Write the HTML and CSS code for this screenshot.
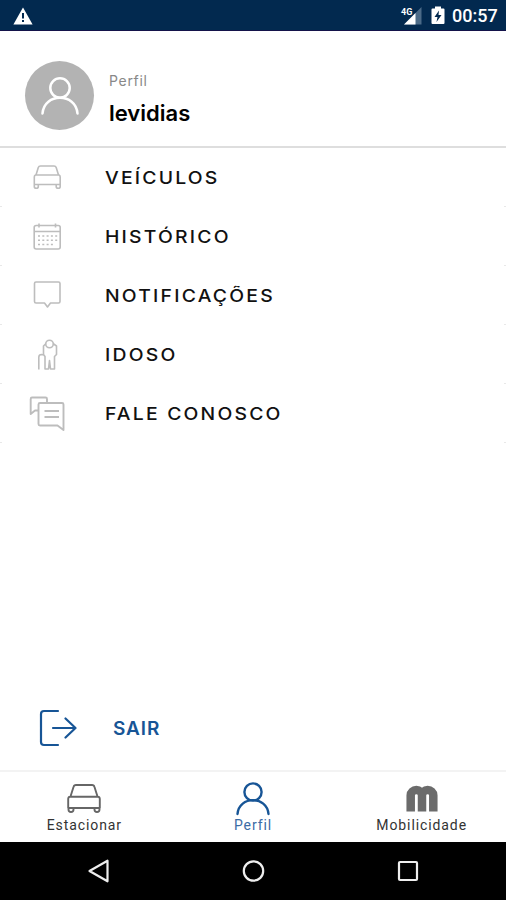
FILE: index.html
```html
<!DOCTYPE html>
<html lang="pt-BR">
<head>
	<meta charset="utf-8" />
	<meta name="viewport" content="width=device-width, initial-scale=1.0" />
	<title>Perfil</title>
	<link rel="stylesheet" href="styles.css">
</head>

<body>
	<div class="status-bar">
		<svg class="warning" width="20" height="18" viewBox="0 0 20 18">
			<path d="M10 .5L19.6 17.500H.4z" fill="#fff" />
			<path d="M10 6v5.500M10 13v2" stroke="#02294f" stroke-width="2" />
		</svg>
		<svg class="signal" width="22" height="20" viewBox="0 0 22 20">
			<path d="M21.500 1v17.500H4z" fill="#4b6a87" />
			<path d="M15.500 7v11.500H4z" fill="#fff" />
			<text x="1" y="9" class="signal-type">4G</text>
		</svg>
		<svg class="battery" width="14" height="19" viewBox="0 0 14 19">
			<path d="M4 .5h6v2h2.500q1 0 1 1V17q0 1-1 1h-11q-1 0-1-1V3.500q0-1 1-1H4z" fill="#fff" />
			<path d="M8 4.500L3.500 11H6.500L5.500 16 10.500 9H7.500z" fill="#02294f" />
		</svg>
		<span class="clock">00:57</span>
	</div>

	<header class="profile">
		<div class="avatar">
			<svg width="38" height="40" viewBox="0 0 38 40" fill="none" stroke="#fff" stroke-width="2.500" stroke-linecap="round">
				<circle cx="19" cy="12" r="9.700" />
				<path d="M1.500 37.500C3 16.500 35 16.500 36.500 37.500" />
			</svg>
		</div>
		<div>
			<div class="profile-label">Perfil</div>
			<div class="profile-name">levidias</div>
		</div>
	</header>

	<nav class="menu">
		<a class="menu-item">
			<svg class="menu-icon" width="40" height="40" viewBox="0 0 40 40">
				<path d="M9 17L11.300 9.500Q11.800 8 13.500 8H27Q28.700 8 29.200 9.500L31.500 17M8.500 17H32Q33.200 17.500 33.200 19V26.500H7.300V19Q7.300 17.500 8.500 17zM7.300 26.500v2q0 1.800 2 1.800t2-1.800v-2M29.200 26.500v2q0 1.800 2 1.800t2-1.800v-2" />
			</svg>
			<span class="menu-text">VEÍCULOS</span>
		</a>
		<a class="menu-item">
			<svg class="menu-icon" width="40" height="40" viewBox="0 0 40 40">
				<rect x="7.200" y="8.500" width="26" height="23.500" rx="2" />
				<path d="M7 14.500H33M12 6.500v4M28.500 6.500v4" />
				<path class="days" d="M11 19H31M11 23.200H31M11 27.500H27" />
			</svg>
			<span class="menu-text">HISTÓRICO</span>
		</a>
		<a class="menu-item">
			<svg class="menu-icon" width="40" height="40" viewBox="0 0 40 40">
				<path d="M9 6H31.500Q33 6 33 7.500V25.500Q33 27 31.500 27H23.500L20.500 31 17.500 27H9Q7.500 27 7.500 25.500V7.500Q7.500 6 9 6z" />
			</svg>
			<span class="menu-text">NOTIFICAÇÕES</span>
		</a>
		<a class="menu-item">
			<svg class="menu-icon" width="40" height="40" viewBox="0 0 40 40">
				<circle cx="22.500" cy="9" r="3.800" />
				<path d="M19 8.500L16.500 11V19.500L18 21.500V34H21.500L22.500 25.500 23.500 34H27.500V21.500L29.500 19.500V11L26 8.500M11.800 34.500V22Q12 19.500 14.500 19.500L17 20" />
			</svg>
			<span class="menu-text">IDOSO</span>
		</a>
		<a class="menu-item">
			<svg class="menu-icon bold" width="40" height="40" viewBox="0 0 40 40">
				<path d="M20 8.500V5Q20 3.500 18.500 3.500H5Q3.700 3.500 3.700 5V20L8 16.500H11" />
				<path d="M13 9H35Q36.500 9 36.500 10.500V36L30.500 31.500H13Q11.500 31.500 11.500 30V10.500Q11.500 9 13 9zM17.500 17H32M17.500 23H32" />
			</svg>
			<span class="menu-text">FALE CONOSCO</span>
		</a>
	</nav>

	<a class="logout">
		<svg width="38" height="38" viewBox="0 0 38 38" fill="none" stroke="#175596" stroke-width="2.200" stroke-linecap="round" stroke-linejoin="round">
			<path d="M19 2H5Q2 2 2 5V33Q2 36 5 36H19M14 19H36.500M26.500 9.500L36.500 19 26.500 28.500" />
		</svg>
		<span class="logout-text">SAIR</span>
	</a>

	<nav class="tabs">
		<a class="tab">
			<svg width="36" height="34" viewBox="0 0 36 34" fill="none" stroke="#666" stroke-width="1.900" stroke-linejoin="round">
				<path d="M4.500 14.500L7.500 5Q8 3 10 3H26Q28 3 28.500 5L31.500 14.500M4 14.800H32Q33.800 15 33.800 17V26H2.200V17Q2.200 15 4 14.800zM2.500 26V27.500Q2.500 30 5 30T7.500 27.500V26M28.500 26V27.500Q28.500 30 31 30T33.500 27.500V26" />
			</svg>
			<span class="tab-text">Estacionar</span>
		</a>
		<a class="tab active">
			<svg width="36" height="34" viewBox="0 0 36 34" fill="none" stroke="#175596" stroke-width="2.400" stroke-linecap="round">
				<circle cx="18" cy="10" r="8.600" />
				<path d="M2.500 32C4 13.500 32 13.500 33.500 32" />
			</svg>
			<span class="tab-text">Perfil</span>
		</a>
		<a class="tab">
			<svg width="36" height="34" viewBox="0 0 36 34" fill="none" stroke="#6b6b6b" stroke-width="8.500">
				<path d="M6.700 29.500V13.200A5.650 5.200 0 0 1 18 13.200V29.500M18 29.500V13.200A5.650 5.200 0 0 1 29.300 13.200V29.500" />
			</svg>
			<span class="tab-text">Mobilicidade</span>
		</a>
	</nav>

	<div class="system-nav">
		<svg width="24" height="26" viewBox="0 0 24 26"><path d="M21.500 2.700V23.300L3.500 13z" /></svg>
		<svg width="24" height="26" viewBox="0 0 24 26"><circle cx="12.500" cy="13" r="9.700" /></svg>
		<svg width="24" height="26" viewBox="0 0 24 26"><rect x="3" y="4" width="18" height="18" rx="1" /></svg>
	</div>
</body>
</html>
```

FILE: styles.css
```css
* {
	box-sizing: border-box;
}
body {
	margin: 0;
	height: 900px;
	display: flex;
	flex-direction: column;
	background: #fff;
	font-family: 'Inter', sans-serif;
	color: #111;
}
svg {
	display: block;
	flex: none;
}

/* android status bar */
.status-bar {
	height: 31px;
	display: flex;
	align-items: center;
	padding: 1px 9px 0 13px;
	background: #02294f;
	border-bottom: 1px solid #14134a;
	color: #fff;
}
.signal {
	margin-left: auto;
	margin-right: 9px;
}
.signal-type {
	font: bold 9px 'Roboto', sans-serif;
	fill: #fff;
}
.battery {
	margin-right: 7px;
}
.clock {
	width: 45px;
	font: 500 18px 'Roboto', sans-serif;
	white-space: nowrap;
}

/* user header */
.profile {
	height: 117px;
	display: flex;
	padding: 30px 0 0 25px;
	border-bottom: 2px solid #dedede;
}
.avatar {
	width: 69px;
	height: 69px;
	margin-right: 15px;
	display: flex;
	align-items: center;
	justify-content: center;
	border-radius: 50%;
	background: #b3b3b3;
}
.profile-label {
	margin-top: 10px;
	font-size: 14px;
	line-height: 20px;
	letter-spacing: 0.7px;
	color: #888;
}
.profile-name {
	margin-top: 9px;
	font-size: 22px;
	font-weight: 600;
	line-height: 26px;
	letter-spacing: 0;
	color: #000;
}

/* menu */
.menu-item {
	height: 59px;
	display: flex;
	align-items: center;
	padding-top: 1px;
	padding-left: 27px;
	/* the divider only shows at both edges */
	background: linear-gradient(90deg, #e8e8e8 2px, transparent 2px, transparent 504px, #e8e8e8 504px) bottom / 100% 1px no-repeat;
}
.menu-icon {
	margin-right: 38px;
	fill: none;
	stroke: #bdbdbd;
	stroke-width: 1.6;
	stroke-linejoin: round;
}
.menu-icon.bold {
	stroke-width: 1.9;
}
.days {
	stroke-dasharray: 2 2.3;
}
.menu-text {
	font-size: 17.5px;
	font-weight: 500;
	line-height: 24px;
	letter-spacing: 2px;
	white-space: nowrap;
	transform: scaleX(1.105);
	transform-origin: left;
}

.logout {
	display: flex;
	align-items: center;
	margin-top: auto;
	margin-bottom: 23px;
	padding-left: 39px;
	color: #175596;
}
.logout-text {
	margin-left: 36px;
	font-size: 19px;
	font-weight: 600;
	letter-spacing: 0.9px;
}

/* bottom tabs */
.tabs {
	height: 72px;
	display: flex;
	border-top: 2px solid #f3f3f3;
}
.tab {
	flex: 1;
	display: flex;
	flex-direction: column;
	align-items: center;
	padding-top: 10px;
	color: #333;
}
.tab.active {
	color: #3b6ba5;
}
.tab-text {
	font: 14px/18px 'Roboto', sans-serif;
	letter-spacing: 0.9px;
}

.system-nav {
	height: 58px;
	display: flex;
	justify-content: space-between;
	align-items: center;
	padding: 0 86px;
	background: #000;
}
.system-nav svg {
	fill: none;
	stroke: #eee;
	stroke-width: 2.2;
	stroke-linejoin: round;
}
```
